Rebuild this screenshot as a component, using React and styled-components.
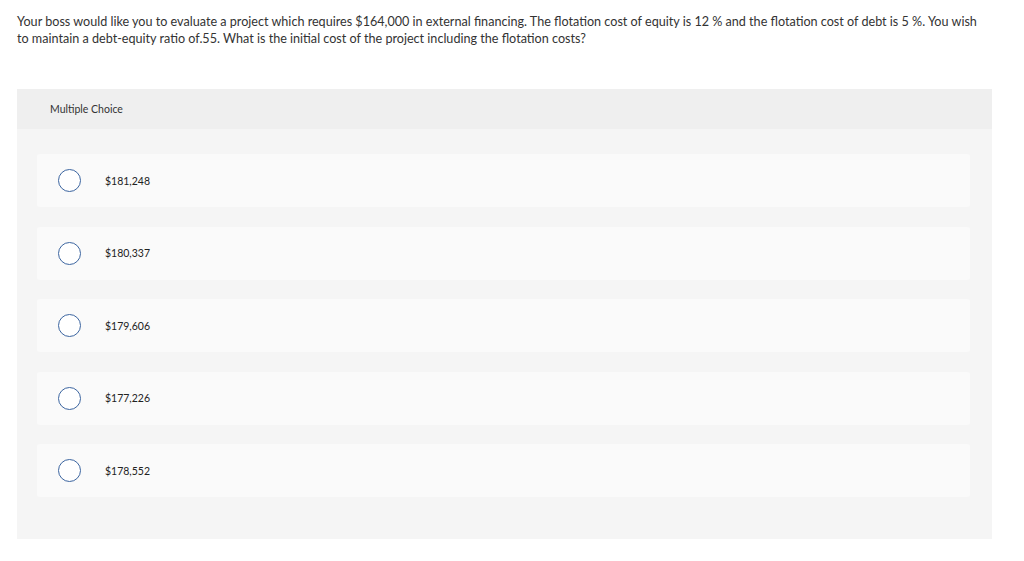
import styled, { createGlobalStyle } from "styled-components";

const GlobalStyle = createGlobalStyle`
  body {
    margin: 0;
    background: #fff;
    font-family: "Lato", "Liberation Sans", sans-serif;
    color: #333;
  }
`;

const Page = styled.div`
  padding: 13px 0 0 17px;
  width: 975px;
`;

const Question = styled.p`
  margin: 0;
  max-width: 966px;
  font-size: 12.6px;
  line-height: 17px;
  color: #333;
`;

const Panel = styled.section`
  margin: 42px 0 0;
  width: 975px;
  background: #f5f5f5;
  padding-bottom: 42px;
`;

const PanelHeader = styled.div`
  height: 40px;
  display: flex;
  align-items: center;
  padding-left: 33px;
  background: #efefef;
  font-size: 10.5px;
  color: #333;
`;

const Choices = styled.div`
  display: flex;
  flex-direction: column;
  gap: 19.5px;
  padding: 25px 22px 0 20px;
`;

const Choice = styled.label`
  display: flex;
  align-items: center;
  height: 53px;
  padding-left: 21px;
  background: #fafafa;
  border-radius: 3px;
  cursor: pointer;
`;

const Radio = styled.span`
  width: 21px;
  height: 21px;
  border: 1px solid #3c65a0;
  border-radius: 50%;
  background: #fff;
  flex-shrink: 0;
`;

const ChoiceText = styled.span`
  margin-left: 24px;
  font-size: 10.5px;
  color: #222;
`;

const options = ["$181,248", "$180,337", "$179,606", "$177,226", "$178,552"];

export default function App() {
  return (
    <>
      <GlobalStyle />
      <Page>
        <Question>
          Your boss would like you to evaluate a project which requires $164,000 in external financing. The flotation cost
          of equity is 12 % and the flotation cost of debt is 5 %. You wish to maintain a debt-equity ratio of.55. What is
          the initial cost of the project including the flotation costs?
        </Question>
        <Panel>
          <PanelHeader>Multiple Choice</PanelHeader>
          <Choices>
            {options.map((o) => (
              <Choice key={o}>
                <Radio />
                <ChoiceText>{o}</ChoiceText>
              </Choice>
            ))}
          </Choices>
        </Panel>
      </Page>
    </>
  );
}
